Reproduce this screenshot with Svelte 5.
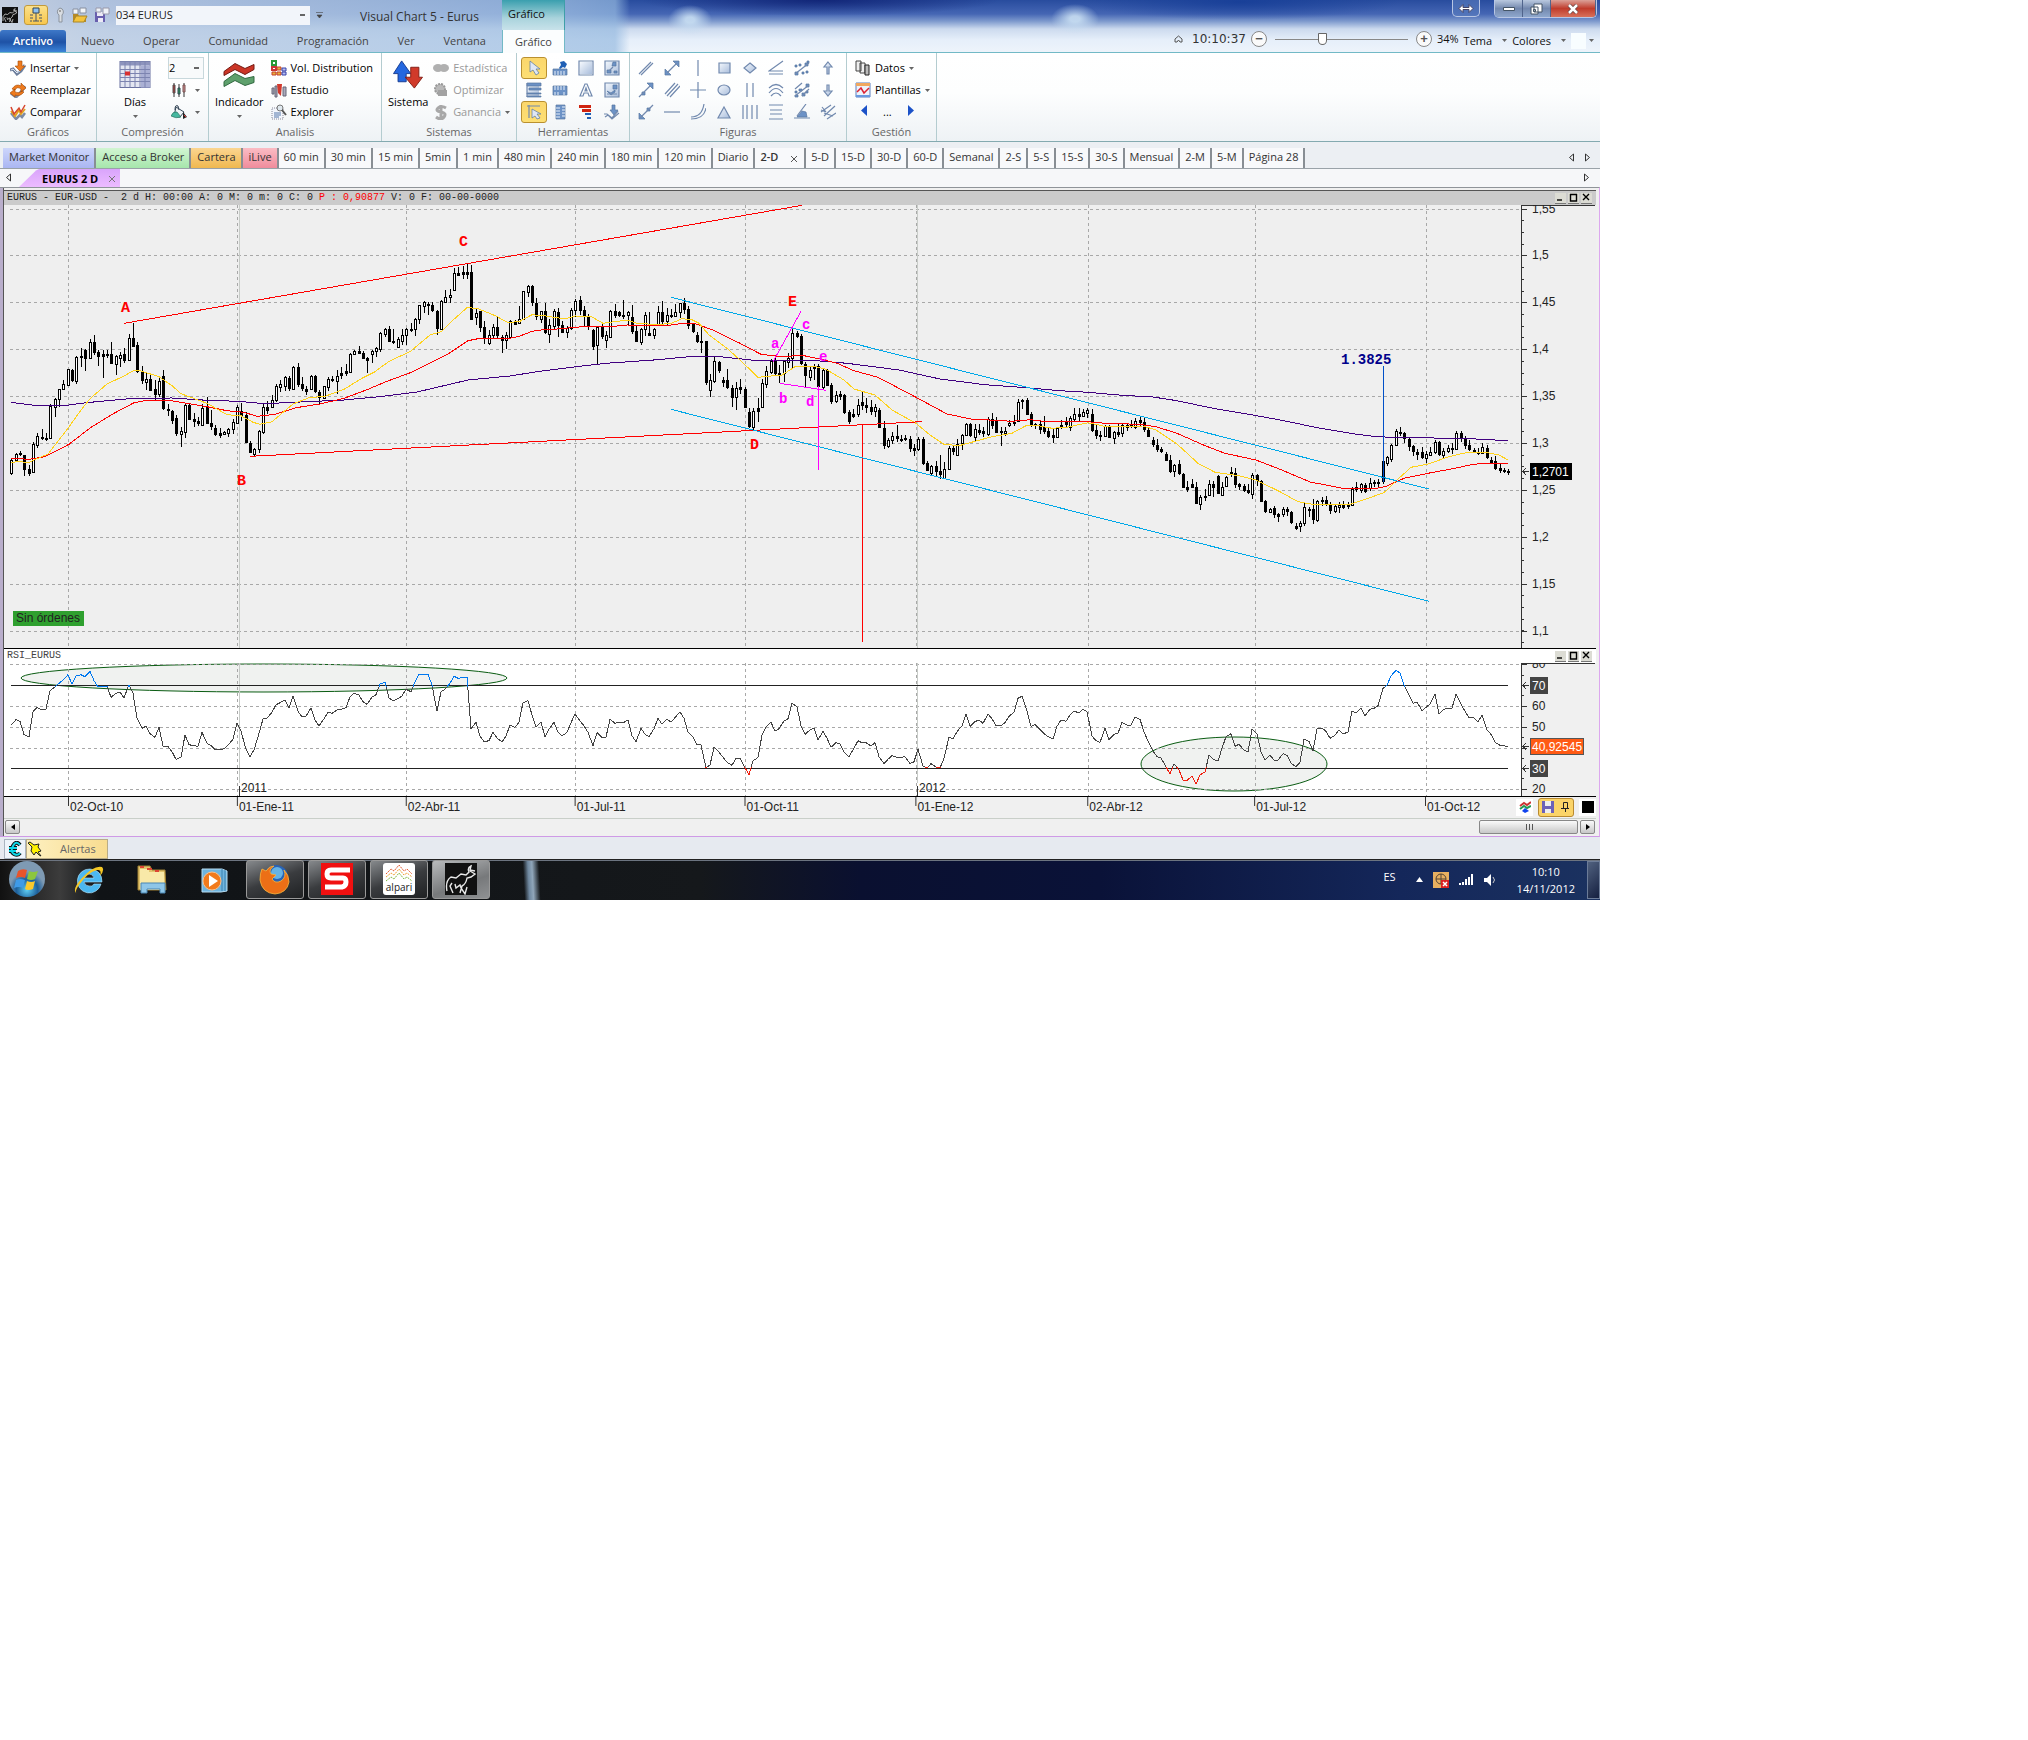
<script lang="ts">
  type Point = [number, number];

  const ribbonTabs = ['Nuevo', 'Operar', 'Comunidad', 'Programación', 'Ver', 'Ventana'];

  const pages = [
    { name: 'Market Monitor', tone: 'blue' },
    { name: 'Acceso a Broker', tone: 'green' },
    { name: 'Cartera', tone: 'amber' },
    { name: 'iLive', tone: 'rose' },
    ...['60 min', '30 min', '15 min', '5min', '1 min', '480 min', '240 min', '180 min', '120 min', 'Diario'].map((name) => ({ name, tone: '' })),
    { name: '2-D', tone: 'current' },
    ...['5-D', '15-D', '30-D', '60-D', 'Semanal', '2-S', '5-S', '15-S', '30-S', 'Mensual', '2-M', '5-M', 'Página 28'].map((name) => ({ name, tone: '' })),
  ];

  // pale: shaded area, f: solid shape, s: outline, cut: white marks, on: pressed
  const tools = [
    { name: 'Puntero', f: 'M4 1v11l3-2 3 5 3-2-3-4h4z', on: true },
    { name: 'Regla fija', f: 'M1 9h14v6H1z', cut: 'M3 11v4M6 11v4M9 11v4M12 11v4', navy: 'M8 2l4-1 3 3-2 4-2-1-3 2-1-1 2-3z' },
    { name: 'Zona', s: 'M1 1h14v14H1z', pale: 'M2 2h12v12H2z' },
    { name: 'Ampliar', pale: 'M1 1h14v14H1z', s: 'M1 1h14v14H1zM9 7l-4 4', f: 'M9 2h3v4H8z M3 10h4v3H3z M10 11h3v2h-3z' },
    { name: 'Panel', pale: 'M1 1h12v14H1z', f: 'M1 1h14v3H1z M3 6h12v2H3z M1 11h14v1H1z M1 14h14v1H1z', s: 'M1 1v14' },
    { name: 'Regla', f: 'M1 4h14v9H1z', cut: 'M3 4v4M6 4v4M9 4v4M12 4v4M3 10v3M6 10v3M12 10v3' },
    { name: 'Texto', s: 'M2 14L7 2h2l5 12h-3l-1-3H6l-1 3zM7 9h2L8 6z' },
    { name: 'Imagen', pale: 'M1 1h14v14H1z', s: 'M1 1h14v14H1zM3 12h10', f: 'M9 3h4v4H9z M3 9l4 2 4-3v2l-4 3z' },
    { name: 'Imán', f: 'M6 5v9l3-2 2 3 3-1-3-4h4z', s: 'M1 2h13M3 1v13', on: true },
    { name: 'Regla vertical', f: 'M4 1h9v14H4z', cut: 'M4 4h4M4 7h4M4 10h4M4 13h4M10 3h3M10 6h3M10 9h3M10 12h3' },
    { name: 'Fibonacci', red: 'M1 1h12v3H1z M4 5h9v3H4z', navy: 'M7 9h6v2H7z M9 13h4v2H9z' },
    { name: 'Ondas', s: 'M0 10h3l5 4 6-7M1 13l3-2 4 4 7-6', f: 'M8 1h3v5h3l-4 5-4-5h2z' },
  ];

  const figures = [
    { name: 'Segmento', s: 'M1 14L13 2M3 15L15 3' },
    { name: 'Recta', s: 'M3 13L13 3', f: 'M1 15v-6l6 6z M15 1v6L9 1z' },
    { name: 'Vertical', s: 'M8 0v16' },
    { name: 'Rectángulo', s: 'M3 3h11v10H3z', pale: 'M3 3h11v10H3z' },
    { name: 'Rombo', s: 'M8 3l6 5-6 5-6-5z', pale: 'M8 3l6 5-6 5-6-5z' },
    { name: 'Ángulo', s: 'M15 1L1 11h14M1 14h14' },
    { name: 'Canal', s: 'M1 14L15 3', f: 'M1 5h2v2H1z M5 4h2v2H5z M11 3h3v3h-3z M1 12h3v3H1z M8 12h2v2H8z M12 11h2v2h-2z M13 1h2v2h-2z' },
    { name: 'Flecha arriba', s: 'M8 2l4 5H9v7H7V7H4z', pale: 'M8 2l4 5H9v7H7V7H4z' },
    { name: 'Semirrecta', s: 'M1 15L12 4', f: 'M15 1v6L9 1z M4 10h3v3H4z' },
    { name: 'Paralelas', s: 'M1 12L11 1M3 14L14 2M6 15L16 4' },
    { name: 'Cruz', s: 'M8 0v16M0 8h16' },
    { name: 'Elipse', s: 'M2 8a6 5 0 0 1 12 0a6 5 0 0 1-12 0z', pale: 'M2 8a6 5 0 0 1 12 0a6 5 0 0 1-12 0z' },
    { name: 'Dos verticales', s: 'M5 1v14M11 1v14' },
    { name: 'Arcos', s: 'M1 6q7-7 14 0M1 11q7-9 14 0M3 14q5-6 10 0' },
    { name: 'Regresión', s: 'M1 7L8 1M1 14L15 3M8 14l7-7', f: 'M1 9h2v2H1z M5 7h3v2H5z M12 2h3v3h-3z M8 11h3v3H8z M12 9h2v2h-2z M1 13h3v2H1z' },
    { name: 'Flecha abajo', s: 'M8 14l4-5H9V3H7v6H4z', pale: 'M8 14l4-5H9V3H7v6H4z' },
    { name: 'Extensión', s: 'M2 14L15 1', f: 'M1 15V9l6 6z M9 4h3v3H9z' },
    { name: 'Horizontal', s: 'M0 8h16' },
    { name: 'Arco', s: 'M1 13q11 0 13-13M1 15q13 0 15-11' },
    { name: 'Triángulo', s: 'M8 3l6 11H2z', pale: 'M8 3l6 11H2z' },
    { name: 'Ciclos', s: 'M1 1v14M5 1v14M10 1v14M15 1v14' },
    { name: 'Niveles', s: 'M1 1h14M2 6h12M2 10h12M1 15h14' },
    { name: 'Gann', s: 'M0 14h16M3 12L12 0', f: 'M3 13l5-6 4 1 1 5z' },
    { name: 'Tridente', s: 'M1 8l10-7M4 12L15 2M7 15l9-6M2 3l4 5M4 9l9 3M1 6l5 2' },
  ];

  // high, body top, body bottom, low in thirds of a pixel; a trailing "+" is a rising bar
  const quotes = `838 841 880 884+|820 822 841 845+|813 819 822 828|825 826 868 887|855 867 878 889|785 793 875 878+|760 769 795 803+|748 771 775 780|759 773 776 782|672 678 775 778+
655 656 680 710+|627 628 656 682+|600 612 628 630+|566 568 615 618+|566 570 600 605|529 532 602 611+|505 529 532 560|506 511 535 572|478 487 535 538+|465 486 516 524
511 516 528 557|509 523 527 593|509 523 526 535|486 523 548 552|525 529 552 584+|517 526 535 561+|505 522 540 548|463 474 541 543+|430 475 499 502|486 496 573 578
558 577 600 611|580 597 605 630+|579 597 629 631|600 627 642 663|592 603 642 651+|570 588 684 690|673 686 690 709|690 694 720 733|705 714 759 768|741 753 762 800+
671 675 757 773+|672 675 717 720|700 717 723 742|711 724 728 738|673 683 735 739+|651 677 730 732|690 729 737 751|735 743 763 768|744 759 764 774|753 757 763 765+
743 746 760 772+|717 727 746 762+|675 681 730 732+|670 692 705 722|697 705 787 790|784 789 815 819|803 806 822 829+|750 754 808 819+|668 682 757 762+|664 682 690 702
645 659 682 685+|612 619 660 665+|600 613 620 636+|588 592 619 632+|588 594 625 632|558 560 628 630+|548 561 612 620|592 612 625 632|618 627 632 645|585 587 628 630+
585 588 634 638|630 635 652 671|617 619 655 658+|590 596 620 632+|588 597 600 606|570 588 602 642+|560 579 585 596|552 574 580 588|519 521 576 580+|510 512 521 525+
498 513 519 523|514 519 534 538|532 535 540 578|509 512 521 548+|500 505 512 532+|457 460 508 515+|444 447 461 470+|438 447 482 486|447 483 486 492|471 478 500 503+
447 465 482 496+|443 446 464 496+|430 446 449 455|413 418 448 467+|374 376 418 431+|364 367 378 398+|366 372 376 405|366 374 389 396|391 394 444 465|361 364 446 449+
331 351 365 368+|328 345 352 368+|264 278 329 332+|260 278 284 288|258 277 282 296|252 277 282 296|255 276 418 420|387 400 410 434+|392 394 440 455|424 440 475 491
450 465 490 496+|433 441 466 473+|411 441 464 476|465 470 480 518|455 466 481 506+|420 422 472 475+|419 423 431 436|378 418 430 432+|332 334 418 420+|315 317 335 351+
315 317 366 378|354 368 408 419|392 394 418 428+|370 393 457 462|418 436 463 489+|386 394 438 449+|385 396 436 472|424 436 455 460|437 443 457 474+|385 389 444 449+
356 363 389 410+|348 361 390 406|378 391 408 440|403 409 435 450|446 450 497 511|438 440 496 552+|432 441 467 476|452 465 479 505+|390 394 470 474+|372 393 404 415
394 397 406 411|360 404 408 417|393 397 406 438+|376 411 454 461|435 453 482 486|443 446 485 494+|397 406 448 467+|395 460 464 466|443 448 466 478+|379 396 436 438+
363 397 422 431|384 406 424 436+|386 404 409 414|372 396 409 411+|368 370 396 414+|354 370 386 402|379 387 436 447|428 433 452 460|455 464 483 490|436 482 486 518
482 484 605 614|583 600 630 650+|530 543 602 608+|542 545 570 578|592 600 605 620|568 600 622 628|615 625 650 682|606 625 650 690+|597 622 627 643|622 626 680 682
683 696 738 743|684 693 740 749+|654 684 693 726|597 610 682 685+|558 573 612 625+|536 544 575 583+|524 543 580 586|555 580 584 609|540 543 580 606+|520 535 546 565+
447 459 535 565+|453 459 468 475|463 468 550 556|546 551 585 622|561 571 590 604+|551 560 565 600|551 558 617 628|567 570 622 630+|566 570 615 617|609 615 663 671
632 644 663 670+|632 643 648 660|642 645 695 702|691 695 722 731|687 702 707 713|658 675 703 711+|635 666 675 690|655 675 680 698|661 681 693 706|672 682 694 710+
683 690 741 744|722 744 795 806|773 781 797 804+|756 769 781 793+|735 768 775 786|765 777 780 786|764 773 777 783|768 777 804 815|791 804 809 828|771 778 808 812+
771 778 848 854|842 849 871 874|855 857 878 888+|843 857 874 887|826 873 881 896|846 866 893 896+|797 803 866 868+|795 803 813 825|776 792 825 827+|762 766 790 809+
728 731 766 769+|730 733 766 770|732 748 770 782+|733 750 755 766|742 754 760 772|710 718 761 768+|700 718 735 746|712 724 755 760|742 753 757 798|740 754 758 769+
720 728 735 742+|705 725 730 738|658 666 722 724+|658 660 664 686|654 661 702 704|696 702 734 742|728 731 735 748|721 731 746 763|708 742 753 762|740 753 767 775
745 765 770 788|740 744 770 775+|720 735 740 746|712 727 732 742|708 715 740 752+|684 702 718 725+|684 702 707 722|688 695 708 712+|684 690 700 715+|687 702 750 755
735 750 765 777|752 764 768 784|734 738 768 771+|735 738 770 775|753 757 775 791+|730 756 761 771|728 735 760 770+|730 735 740 752|720 732 738 744|715 723 740 747+
709 720 726 742|714 725 747 755|744 749 767 770|770 779 793 802|778 795 808 816|801 808 812 819|815 822 839 842|826 841 872 879|851 854 874 890+|840 852 880 885
878 882 921 924|903 922 927 935|896 911 920 925|906 921 968 970|946 951 971 990+|928 947 952 962|901 912 944 948+|902 913 920 951|885 888 940 943|907 920 944 949+
887 890 918 920+|861 876 880 890|864 878 913 924|909 912 917 929|913 918 930 935|912 930 937 942|879 885 941 956+|883 885 900 917|901 903 962 965|959 964 992 998
983 986 997 1000+|978 985 1002 1014|999 1001 1007 1026|981 988 1003 1010+|980 988 993 1008|993 996 1026 1032|1030 1039 1043 1050|1024 1028 1038 1057+|967 981 1030 1038+|982 986 990 1011
957 986 1018 1033|961 964 1021 1025+|950 960 964 978+|947 959 973 977|965 974 990 1002|972 978 992 1000+|965 975 982 998+|963 973 980 988|965 972 977 988|922 926 976 978+
905 922 928 935|908 912 930 940+|910 915 933 938|895 908 925 932+|899 905 910 922|896 906 910 924|842 844 904 912|829 832 848 859+|792 796 836 846+|747 753 796 799+
741 755 759 769|756 759 775 790|772 778 797 812|794 797 814 829|806 816 822 840|801 816 830 838|813 822 835 848+|801 816 824 827+|779 787 817 822+|782 785 822 828
803 813 826 838+|796 804 812 820+|790 804 808 822|754 760 807 810+|753 760 772 786|768 778 796 807|779 795 807 812|805 810 815 820|803 815 820 826|789 801 818 822+
795 803 832 838|832 840 845 852|828 843 865 870|850 864 870 878|864 869 873 878|866 872 877 884`;

  const barX = (i: number) => Math.round(11.4 + i * 4.339);
  const px = (v: number) => Math.round(v / 3);

  const candles = quotes.split(/[|\n]/).map((row, i) => {
    const up = row.endsWith('+');
    const [high, top, bottom, low] = row.replace('+', '').split(' ').map(Number);
    return { x: barX(i), high: px(high), top: px(top), height: Math.max(1, px(bottom) - px(top)), bottom: px(bottom), low: px(low), up };
  });

  const rsi = [
    255, 239, 244, 284, 290, 215, 202, 210, 207, 152, 141, 130, 120, 104, 133, 108, 104, 110, 94, 122,
    141, 139, 138, 172, 160, 157, 173, 134, 160, 235, 265, 259, 281, 292, 262, 318, 319, 335, 358, 352,
    285, 314, 317, 319, 277, 310, 317, 329, 329, 326, 315, 298, 250, 274, 328, 350, 330, 280, 237, 234,
    217, 194, 188, 180, 204, 169, 214, 230, 229, 203, 240, 258, 236, 217, 220, 210, 208, 203, 170, 160,
    165, 185, 193, 171, 164, 132, 127, 174, 182, 176, 168, 148, 155, 125, 103, 103, 103, 135, 214, 155,
    148, 130, 109, 115, 113, 112, 266, 247, 288, 305, 302, 277, 294, 306, 288, 255, 262, 247, 188, 182,
    225, 262, 247, 290, 268, 247, 277, 288, 277, 248, 222, 243, 257, 277, 317, 278, 292, 291, 238, 250,
    247, 249, 240, 287, 305, 265, 283, 290, 266, 235, 253, 238, 246, 233, 215, 235, 277, 290, 314, 315,
    384, 375, 322, 337, 352, 367, 376, 355, 355, 383, 404, 363, 352, 285, 262, 247, 273, 266, 243, 236,
    190, 200, 258, 283, 270, 265, 300, 274, 295, 322, 308, 312, 336, 350, 330, 302, 308, 308, 318, 308,
    350, 371, 358, 347, 352, 352, 350, 371, 365, 328, 378, 384, 371, 381, 384, 355, 291, 296, 275, 257,
    223, 259, 245, 240, 250, 222, 236, 257, 257, 248, 229, 217, 175, 169, 213, 259, 254, 268, 281, 290,
    297, 259, 240, 244, 225, 213, 219, 208, 215, 288, 302, 307, 265, 299, 283, 280, 247, 255, 256, 232,
    238, 275, 304, 333, 350, 354, 380, 402, 371, 390, 420, 421, 409, 433, 405, 396, 345, 358, 363, 325,
    290, 281, 319, 313, 330, 336, 268, 283, 335, 359, 346, 360, 360, 341, 346, 370, 380, 367, 297, 304,
    333, 267, 264, 274, 295, 286, 270, 281, 277, 213, 219, 205, 227, 208, 205, 197, 145, 136, 108, 91,
    99, 135, 165, 190, 186, 212, 202, 192, 163, 222, 209, 204, 204, 163, 192, 214, 233, 233, 246, 225,
    270, 283, 307, 316, 317, 320,
  ];

  const fast: Point[] = [[11, 848], [17, 845], [29, 847], [34, 840], [48, 822], [68, 745], [81, 690], [90, 656], [107, 612], [124, 588], [134, 571], [141, 573], [159, 590], [172, 617], [181, 641], [207, 670], [227, 704], [241, 707], [253, 727], [260, 733], [272, 725], [293, 672], [310, 652], [324, 650], [344, 628], [362, 595], [375, 575], [389, 544], [410, 515], [430, 465], [441, 455], [455, 415], [467, 383], [477, 385], [496, 408], [508, 428], [520, 424], [532, 404], [546, 408], [565, 417], [575, 408], [591, 409], [603, 430], [627, 420], [637, 430], [658, 434], [672, 429], [682, 416], [692, 419], [699, 430], [709, 465], [727, 505], [740, 540], [758, 592], [782, 585], [795, 560], [813, 558], [826, 568], [844, 600], [854, 627], [875, 645], [892, 690], [916, 730], [930, 765], [944, 793], [959, 797], [992, 770], [1012, 760], [1026, 737], [1040, 738], [1052, 745], [1067, 742], [1088, 728], [1108, 741], [1143, 738], [1156, 750], [1177, 792], [1198, 850], [1215, 877], [1239, 887], [1256, 900], [1280, 935], [1298, 965], [1315, 974], [1349, 974], [1363, 960], [1384, 938], [1397, 900], [1411, 862], [1428, 852], [1449, 830], [1466, 818], [1487, 818], [1499, 825], [1508, 840]];
  const medium: Point[] = [[11, 836], [19, 836], [29, 838], [45, 830], [69, 793], [91, 742], [114, 700], [134, 668], [148, 660], [167, 660], [207, 680], [227, 692], [244, 697], [257, 709], [275, 703], [296, 683], [320, 672], [344, 655], [368, 628], [386, 605], [413, 575], [448, 522], [468, 482], [480, 475], [510, 475], [520, 468], [532, 454], [541, 450], [554, 448], [582, 440], [610, 440], [627, 435], [665, 438], [682, 430], [696, 432], [713, 450], [740, 490], [761, 523], [782, 530], [802, 526], [820, 537], [837, 550], [854, 572], [878, 592], [916, 652], [947, 702], [971, 717], [1012, 724], [1030, 719], [1050, 726], [1088, 725], [1105, 730], [1139, 733], [1156, 740], [1177, 760], [1205, 797], [1225, 820], [1256, 840], [1280, 868], [1311, 907], [1325, 914], [1342, 925], [1377, 925], [1387, 918], [1404, 895], [1428, 880], [1453, 866], [1473, 853], [1487, 850], [1508, 852]];
  const slow: Point[] = [[11, 667], [26, 673], [38, 677], [67, 676], [86, 668], [134, 655], [172, 654], [207, 661], [238, 664], [265, 671], [293, 667], [344, 660], [379, 650], [417, 636], [468, 600], [510, 588], [537, 575], [582, 558], [606, 550], [658, 539], [689, 530], [720, 530], [754, 541], [789, 541], [820, 543], [847, 550], [899, 570], [940, 597], [985, 614], [1030, 624], [1060, 632], [1088, 637], [1122, 646], [1153, 651], [1177, 662], [1215, 686], [1253, 705], [1287, 724], [1315, 742], [1353, 761], [1377, 770], [1404, 773], [1463, 775], [1508, 782]];

  const line = (points: Point[]) => points.map(([x, v]) => `${x},${(v / 3).toFixed(1)}`).join(' ');
  const rsiLine = line(rsi.map((v, i) => [barX(i), v]));

  const averages = [
    { name: 'slow', points: line(slow) },
    { name: 'medium', points: line(medium) },
    { name: 'fast', points: line(fast) },
  ];

  const trends = [
    { tone: 'red', a: [124, 430], b: [802, 76] },
    { tone: 'red', a: [250, 829], b: [922, 725] },
    { tone: 'red', a: [862, 733], b: [862, 1386] },
    { tone: 'sky', a: [671, 352], b: [1429, 927] },
    { tone: 'sky', a: [671, 688], b: [1429, 1264] },
    { tone: 'pink', a: [773, 545], b: [801, 394] },
    { tone: 'pink', a: [780, 610], b: [826, 631] },
    { tone: 'pink', a: [818, 617], b: [818, 870] },
    { tone: 'royal', a: [1383, 558], b: [1383, 905] },
  ];

  const waves = [
    { text: 'A', x: 121, y: 396, tone: 'major' },
    { text: 'B', x: 237, y: 915, tone: 'major' },
    { text: 'C', x: 459, y: 198, tone: 'major' },
    { text: 'D', x: 750, y: 807, tone: 'major' },
    { text: 'E', x: 788, y: 378, tone: 'major' },
    { text: 'a', x: 771, y: 504, tone: 'minor' },
    { text: 'b', x: 779, y: 669, tone: 'minor' },
    { text: 'c', x: 802, y: 447, tone: 'minor' },
    { text: 'd', x: 806, y: 678, tone: 'minor' },
    { text: 'e', x: 819, y: 543, tone: 'minor' },
  ];

  const prices = ['1,55', '1,5', '1,45', '1,4', '1,35', '1,3', '1,25', '1,2', '1,15', '1,1'].map((label, i) => ({ label, y: Math.floor(29 + i * 46.9) }));
  const priceTicks = Array.from({ length: 38 }, (_, i) => Math.floor(29 + i * 11.72));
  const levels = [
    { label: '80', y: 24 },
    { label: '60', y: 66 },
    { label: '50', y: 87 },
    { label: '', y: 108 },
    { label: '20', y: 149 },
  ];
  const rsiTicks = [35, 55, 76, 97, 118, 138];

  const dates = [
    { label: '02-Oct-10', x: 68 },
    { label: '01-Ene-11', x: 237 },
    { label: '02-Abr-11', x: 406 },
    { label: '01-Jul-11', x: 575 },
    { label: '01-Oct-11', x: 745 },
    { label: '01-Ene-12', x: 916 },
    { label: '02-Abr-12', x: 1088 },
    { label: '01-Jul-12', x: 1255 },
    { label: '01-Oct-12', x: 1426 },
  ];
  const years = [
    { label: '2011', x: 239 },
    { label: '2012', x: 917 },
  ];

  let zoom = $state(34);
  let symbol = $state('034 EURUS');
</script>

{#snippet caret()}
  <svg class="caret" width="5" height="3" viewBox="0 0 5 3" aria-hidden="true"><path d="M0 0h5L2.5 3z" /></svg>
{/snippet}

{#snippet bull(size: number)}
  <svg width={size} height={size} viewBox="0 0 32 32" aria-hidden="true">
    <rect width="32" height="32" fill="#111" />
    <path d="M2 28Q0 18 6 14l5 1 5-4 5 1 3-3q-2-4 2-6l-1 4 5 1M25 8l5 3-4 3-4 1q-1 6-5 8l-2 7M7 20l-2 3 3 7M10 21l1 4 4-3 1 3 4 6 2-7" fill="none" stroke="#e8e8e8" stroke-width="1.4" />
  </svg>
{/snippet}

{#snippet glyph(icon: { name: string; s?: string; f?: string; pale?: string; cut?: string; red?: string; navy?: string; on?: boolean })}
  <button class="glyph" class:on={icon.on} aria-label={icon.name}>
    <svg width="16" height="16" viewBox="0 0 16 16">
      {#if icon.pale}<path d={icon.pale} fill="url(#steel)" />{/if}
      {#if icon.f}<path d={icon.f} fill={icon.on ? '#dfe7f4' : '#6c92c6'} stroke="#56759f" stroke-width=".7" />{/if}
      {#if icon.s}<path d={icon.s} fill="none" stroke="#7189ae" stroke-width="1.2" />{/if}
      {#if icon.cut}<path d={icon.cut} fill="none" stroke="#e8f0fa" />{/if}
      {#if icon.red}<path d={icon.red} fill="#cf2410" />{/if}
      {#if icon.navy}<path d={icon.navy} fill="#1f5fb4" />{/if}
    </svg>
  </button>
{/snippet}

{#snippet paneButtons()}
  <div class="pane-buttons">
    <button aria-label="Minimizar panel"><svg width="9" height="9"><path d="M1 7h5" /></svg></button>
    <button aria-label="Maximizar panel"><svg width="9" height="9"><path d="M1 1.5h7M1.5 1v7h6V1" /></svg></button>
    <button aria-label="Cerrar panel"><svg width="9" height="9"><path d="M1 1l6 6M7 1L1 7" /></svg></button>
  </div>
{/snippet}

<main class="screen">
  <header class="frame">
    <div class="title-bar">
      <div class="quick">
        {@render bull(16)}
        <button class="quick-on" aria-label="Conexión">
          <svg width="16" height="16" viewBox="0 0 16 16"><path d="M5 1h6v5H5z" fill="#8cc0f0" stroke="#345" /><path d="M8 6v8M5 14h6M2 8h3M11 8h3M2 11h3M11 11h3M2 14h2M12 14h2" stroke="#456" fill="none" /></svg>
        </button>
        <button aria-label="Clave">
          <svg width="12" height="16" viewBox="0 0 12 16"><path d="M6 1a4 4 0 0 1 2 7v7H5V8a4 4 0 0 1 1-7z" fill="#d9dde2" stroke="#8b939d" /><circle cx="6" cy="4" r="1" fill="#888" /></svg>
        </button>
        <button aria-label="Abrir">
          <svg width="16" height="16" viewBox="0 0 16 16"><path d="M1 2h5v5H1zM8 1h6v5H8z" fill="#f2f5f8" stroke="#8890a0" /><path d="M1 7h5l1 2h7v6H1z" fill="#b58a28" /><path d="M1 15l3-6h11l-3 6z" fill="#f4c33c" stroke="#a98626" /></svg>
        </button>
        <button aria-label="Guardar">
          <svg width="16" height="16" viewBox="0 0 16 16"><path d="M1 5h10v10H1z" fill="#685fae" /><path d="M3 5h6v4H3zM4 11h5v4H4z" fill="#eceaf6" /><path d="M2 1h5v4H2zM9 1h6v6H9z" fill="#eef2f8" stroke="#99a" /></svg>
        </button>
        <select class="symbol" aria-label="Símbolo" bind:value={symbol}><option>034 EURUS</option></select>
        <button class="more" aria-label="Personalizar"><svg width="7" height="6"><path d="M0 .5h7M1 3h5L3.5 6z" fill="#444" stroke="#444" stroke-width=".6" /></svg></button>
      </div>
      <h1>Visual Chart 5 - Eurus</h1>
      <div class="context">Gráfico</div>
      <div class="window-buttons">
        <button class="swap" aria-label="Cambiar"><svg width="16" height="9"><path d="M1 4.5l4-4v3h6v-3l4 4-4 4v-3H5v3z" fill="#fff" stroke="#446" /></svg></button>
        <div class="caption">
          <button aria-label="Minimizar"><svg width="12" height="6"><path d="M.5 1.5h11v3H.5z" fill="#fff" stroke="#456" /></svg></button>
          <button aria-label="Restaurar"><svg width="13" height="12"><path d="M4 1h8v8H4zM1 4h7v7H1zM3.5 6.5h2v2h-2z" fill="#fff" stroke="#456" /></svg></button>
          <button class="close" aria-label="Cerrar"><svg width="12" height="10"><path d="M2 1l8 8M10 1L2 9" stroke="#644" stroke-width="4" /><path d="M2 1l8 8M10 1L2 9" stroke="#fff" stroke-width="2.5" /></svg></button>
        </div>
      </div>
    </div>

    <nav class="ribbon-tabs">
      <button class="file">Archivo</button>
      <div class="tab-list">
        {#each ribbonTabs as tab}
          <button>{tab}</button>
        {/each}
      </div>
      <button class="selected">Gráfico</button>
      <div class="status">
        <svg width="9" height="8" viewBox="0 0 9 8" fill="none" stroke="#555" aria-hidden="true"><path d="M1 4l3.5-3L8 4v3H6L4.5 5 3 7H1z" /></svg>
        <time>10:10:37</time>
        <button class="round" aria-label="Reducir">−</button>
        <input type="range" min="0" max="98" bind:value={zoom} aria-label="Zoom" />
        <button class="round" aria-label="Ampliar">+</button>
        <span class="percent">34%</span>
        <button class="drop">Tema {@render caret()}</button>
        <button class="drop">Colores {@render caret()}</button>
        <button class="swatch" aria-label="Color"><i></i>{@render caret()}</button>
      </div>
    </nav>
  </header>

  <section class="ribbon" aria-label="Gráfico">
    <div class="group charts">
      <div class="column">
        <button class="command"><svg width="16" height="16" viewBox="0 0 16 16"><path d="M0 10l3-1 4 5 4-3 4-6" fill="none" stroke="#6d7f9c" stroke-width="3" /><path d="M1 10l2-1 4 4 4-3 4-5" fill="none" stroke="#dfe8f5" /><path d="M8 1h4v5h3l-5 5-5-5h3z" fill="#ee7b1e" stroke="#a34a08" stroke-width=".6" /></svg>Insertar {@render caret()}</button>
        <button class="command"><svg width="16" height="16" viewBox="0 0 16 16"><path d="M1 11l5 4 5-5 4-6" fill="none" stroke="#7d8aa3" stroke-width="3" /><path d="M2 7q4-6 9-3V1l5 5-5 4V7Q7 4 5 8zM0 11l5-4v3q4 2 7-1l2 1q-4 5-9 3v2z" fill="#ee7b1e" stroke="#a34a08" stroke-width=".6" /></svg>Reemplazar</button>
        <button class="command"><svg width="16" height="16" viewBox="0 0 16 16"><path d="M1 9l5 6 4-4 2 2 3-4" fill="none" stroke="#7d8ba5" stroke-width="2.5" /><path d="M1 7l4 5 4-6 2 4 4-5" fill="none" stroke="#e3a41e" stroke-width="2" /><path d="M1 3l3 7 5-6 2 4 4-7" fill="none" stroke="#d6452d" stroke-width="1.5" /></svg>Comparar</button>
      </div>
      <h2>Gráficos</h2>
    </div>

    <div class="group compression">
      <div class="body">
        <button class="big">
          <svg width="32" height="28" viewBox="0 0 32 28" aria-hidden="true"><rect x="1" y="1" width="30" height="26" fill="#e3e6f1" stroke="#6870a0" /><path d="M1 1h30v4H1z" fill="#8d94bd" /><path d="M22 5h9v22h-9z" fill="#aab0d4" /><path d="M1 9h30M1 13h30M1 17h30M1 21h30M6 1v26M11 1v26M16 1v26M21 1v26M26 1v26" stroke="#7c84b0" /><path d="M6 11h5v4H6z" fill="#d83030" /></svg>
          Días {@render caret()}
        </button>
        <div class="column tight">
          <select aria-label="Compresión"><option>2</option></select>
          <button class="command" aria-label="Tipo de gráfico"><svg width="16" height="16" viewBox="0 0 16 16"><path d="M3 1v14M8 2v13M13 1v14" stroke="#333" /><path d="M2 3h2v8H2z" fill="#a33" stroke="#555" /><path d="M7 6h2v6H7z" fill="#2d9a55" stroke="#345" /><path d="M12 3h2v7h-2z" fill="#d08a8a" stroke="#755" /></svg>{@render caret()}</button>
          <button class="command" aria-label="Relleno"><svg width="16" height="16" viewBox="0 0 16 16"><path d="M5 3l8 5-4 5-6-1z" fill="#f0f3f6" stroke="#345" /><path d="M0 12q2-5 6-4l4 5q-5 2-10-1z" fill="#46b8a0" stroke="#265" stroke-width=".6" /><path d="M4 6q0-6 3-4l1 4" fill="none" stroke="#345" /><path d="M12 8l4 5-4 2z" fill="#222" /><path d="M13 11l2 2" stroke="#d33" /></svg>{@render caret()}</button>
        </div>
      </div>
      <h2>Compresión</h2>
    </div>

    <div class="group analysis">
      <div class="body">
        <button class="big">
          <svg width="32" height="28" viewBox="0 0 32 28" aria-hidden="true"><path d="M1 11L12 3l10 5 9-4v5l-9 5-10-5L1 15z" fill="#cb3526" stroke="#741a12" /><path d="M1 21l11-8 10 5 9-2v6l-9 3-10-5-11 6z" fill="#5ea06c" stroke="#316941" /></svg>
          Indicador {@render caret()}
        </button>
        <div class="column">
          <button class="command"><svg width="16" height="16" viewBox="0 0 16 16"><path d="M1 1h4v4H1z" fill="#fff" stroke="#2a9a35" stroke-width="2" /><path d="M1 7h4v3H1z" fill="#fff" stroke="#c33" stroke-width="2" /><path d="M1 12h4v3H1zM6 12h4v3H6zM6 7h4v3H6z" fill="#e9b03a" stroke="#c3402a" /><path d="M11 8h4v3h-4zM11 12h4v3h-4z" fill="#b6bdf0" stroke="#3842a8" /></svg>Vol. Distribution</button>
          <button class="command"><svg width="16" height="16" viewBox="0 0 16 16"><path d="M1 6h2v6H1zM4 4h2v11H4zM12 5h3v9h-3z" fill="#aab" stroke="#667" /><path d="M6 2h5l-1 12-3-3z" fill="#d23a2e" /></svg>Estudio</button>
          <button class="command"><svg width="16" height="16" viewBox="0 0 16 16"><path d="M1 4h11v11H1z" fill="#f3f6fc" stroke="#889" stroke-dasharray="1 1" /><path d="M3 9h7M3 11h7M3 13h5" stroke="#57a" /><circle cx="9" cy="4" r="3" fill="#dfe8ee" stroke="#777" /><path d="M11 6l4 5" stroke="#555" stroke-width="2" /></svg>Explorer</button>
        </div>
      </div>
      <h2>Analisis</h2>
    </div>

    <div class="group systems">
      <div class="body">
        <button class="big">
          <svg width="34" height="32" viewBox="0 0 34 32" aria-hidden="true"><path d="M10 1l10 14h-5v9H6v-9H1z" fill="#2467df" stroke="#12378c" /><path d="M20 8h9v11h4L24 31 14 19h6z" fill="#d03a2a" stroke="#7e1b12" /></svg>
          Sistema
        </button>
        <div class="column">
          <button class="command off" disabled><svg width="16" height="16" viewBox="0 0 16 16"><ellipse cx="5" cy="8" rx="5" ry="4" /><ellipse cx="11" cy="8" rx="5" ry="4" /></svg>Estadística</button>
          <button class="command off" disabled><svg width="16" height="16" viewBox="0 0 16 16"><circle cx="7" cy="7" r="5" fill="#b9b9b9" stroke="#999" stroke-width="2" stroke-dasharray="2 1" /><path d="M5 8h9v6H5z" fill="#a2a2a2" /></svg>Optimizar</button>
          <button class="command off" disabled><svg width="16" height="16" viewBox="0 0 16 16"><path d="M13 4q-5-3-8 0t3 4 3 5-8 0M8 1v14" fill="none" stroke="#a8a8a8" stroke-width="3" /></svg>Ganancia {@render caret()}</button>
        </div>
      </div>
      <h2>Sistemas</h2>
    </div>

    <svg class="defs" width="0" height="0" aria-hidden="true">
      <linearGradient id="steel" x1="0" y1="0" x2="1" y2="1"><stop offset="0" stop-color="#f4f8fd" /><stop offset="1" stop-color="#a9bddb" /></linearGradient>
    </svg>

    <div class="group toolset">
      <div class="glyphs">
        {#each tools as icon}{@render glyph(icon)}{/each}
      </div>
      <h2>Herramientas</h2>
    </div>

    <div class="group figures">
      <div class="glyphs wide">
        {#each figures as icon}{@render glyph(icon)}{/each}
      </div>
      <h2>Figuras</h2>
    </div>

    <div class="group manage">
      <div class="column">
        <button class="command"><svg width="16" height="16" viewBox="0 0 16 16"><path d="M1 1h5v10H1zM5 3h5v10H5z" fill="#eee" stroke="#444" /><path d="M10 5h4v10h-4z" fill="#bbb" stroke="#222" /></svg>Datos {@render caret()}</button>
        <button class="command"><svg width="16" height="16" viewBox="0 0 16 16"><path d="M1 1h14v14H1z" fill="#eef3fb" stroke="#5a7fc0" /><path d="M1 1h14v3H1z" fill="#f0a860" /><path d="M2 10l4-4 3 5 5-5" fill="none" stroke="#d23" stroke-width="1.5" /><path d="M1 13h14v2H1z" fill="#6a9ae0" /></svg>Plantillas {@render caret()}</button>
        <div class="pager">
          <button aria-label="Anterior"><svg width="6" height="11"><path d="M6 0v11L0 5.5z" fill="#1c52c8" /></svg></button>
          <button>...</button>
          <button aria-label="Siguiente"><svg width="6" height="11"><path d="M0 0v11l6-5.5z" fill="#1c52c8" /></svg></button>
        </div>
      </div>
      <h2>Gestión</h2>
    </div>
  </section>

  <nav class="pages">
    {#each pages as page}
      <button class="page {page.tone}">
        {page.name}
        {#if page.tone === 'current'}<svg width="18" height="8" viewBox="0 0 18 8" aria-hidden="true"><path d="M10 1l6 6M16 1l-6 6" stroke="#555" /></svg>{/if}
      </button>
    {/each}
    <div class="steps">
      <button aria-label="Páginas anteriores"><svg width="6" height="9"><path d="M5.5 1v7l-4-3.5z" /></svg></button>
      <button aria-label="Páginas siguientes"><svg width="6" height="9"><path d="M.5 1v7l4-3.5z" /></svg></button>
    </div>
  </nav>

  <div class="documents">
    <button class="step" aria-label="Anterior"><svg width="6" height="9"><path d="M5.5 1v7l-4-3.5z" /></svg></button>
    <button class="document">EURUS 2 D <svg width="8" height="8" viewBox="0 0 8 8" aria-hidden="true"><path d="M1 1l6 6M7 1L1 7" stroke="#777" /></svg></button>
    <button class="step end" aria-label="Siguiente"><svg width="6" height="9"><path d="M.5 1v7l4-3.5z" /></svg></button>
  </div>

  <section class="chart-window">
    <div class="quote-bar">
      <span>EURUS - EUR-USD -&nbsp; 2 d H: 00:00 A: 0 M: 0 m: 0 C: 0 <em>P : 0,90877</em> V: 0 F: 00-00-0000</span>
      {@render paneButtons()}
    </div>

    <svg class="plot" viewBox="4 25 1592 443" role="img" aria-label="EURUS 2 D">
      <g class="grid">
        {#each prices as p}<path d="M10 {p.y}.5H1521" />{/each}
        {#each dates as d}<path d="M{d.x}.5 25V468" />{/each}
      </g>
      {#each years as y}<path class="year" d="M{y.x}.5 25V468" />{/each}

      <g class="candles">
        {#each candles as c}
          <path d="M{c.x}.5 {c.high}V{c.top}M{c.x}.5 {c.bottom}V{c.low}" />
          {#if c.up}
            <rect x={c.x - 0.5} y={c.top + 0.5} width="2" height={c.height} fill="#fff" />
          {:else}
            <rect class="down" x={c.x - 1} y={c.top} width="3" height={c.height + 1} />
          {/if}
        {/each}
      </g>

      {#each averages as a}<polyline class="average {a.name}" points={a.points} />{/each}
      {#each trends as t}
        <line class="trend {t.tone}" x1={t.a[0]} y1={t.a[1] / 3} x2={t.b[0]} y2={t.b[1] / 3} />
      {/each}
      {#each waves as w}<text class={w.tone} x={w.x} y={w.y / 3}>{w.text}</text>{/each}
      <text class="target" x="1341" y="184">1.3825</text>

      <rect x="13" y="431" width="71" height="15" fill="#2fa02f" />
      <text class="orders" x="16" y="442">Sin órdenes</text>

      <g class="axis">
        <path d="M1521.5 25V468M1521 25.5H1595" />
        {#each prices as p}
          <path d="M1521 {p.y}.5h6" />
          <text x="1532" y={p.y + 4}>{p.label}</text>
        {/each}
        {#each priceTicks as y}<path d="M1521 {y}.5h3" />{/each}
        <path d="M1523 291.5h6M1526 288l-3 3.5 3 3.5" />
        <rect x="1530" y="283" width="42" height="17" fill="#000" />
        <text class="light" x="1532" y="296">1,2701</text>
      </g>
    </svg>

    <div class="rsi-bar">
      <span>RSI_EURUS</span>
      {@render paneButtons()}
    </div>

    <svg class="plot rsi" viewBox="4 23 1592 133" role="img" aria-label="RSI_EURUS">
      <defs>
        <clipPath id="overbought"><rect x="4" y="23" width="1592" height="24" /></clipPath>
        <clipPath id="neutral"><rect x="4" y="46" width="1592" height="81" /></clipPath>
        <clipPath id="oversold"><rect x="4" y="127" width="1592" height="30" /></clipPath>
      </defs>
      <rect x="1521" y="23" width="75" height="133" fill="#f0f0f0" />
      <ellipse class="zone" cx="264" cy="38" rx="243" ry="14" />
      <ellipse class="zone" cx="1234" cy="124" rx="93" ry="27" />
      <g class="grid">
        {#each levels as l}<path d="M10 {l.y}.5H1521" />{/each}
        {#each dates as d}<path d="M{d.x}.5 23V156" />{/each}
      </g>
      {#each years as y}
        <path class="year" d="M{y.x}.5 23V143" />
        <path class="mark" d="M{y.x}.5 146V156" />
        <text x={y.x + 2} y="152">{y.label}</text>
      {/each}
      <path class="limit" d="M11 45.5H1508M11 128.5H1508" />
      <polyline class="strength" points={rsiLine} clip-path="url(#neutral)" />
      <polyline class="strength high" points={rsiLine} clip-path="url(#overbought)" />
      <polyline class="strength low" points={rsiLine} clip-path="url(#oversold)" />
      <g class="axis">
        <path d="M1521.5 23V156M1521 23.5H1595" />
        {#each levels as l}
          <path d="M1521 {l.y}.5h6" />
          {#if l.label}<text x="1532" y={l.y + 4}>{l.label}</text>{/if}
        {/each}
        {#each rsiTicks as y}<path d="M1521 {y}.5h3" />{/each}
        <path d="M1523 45.5h6M1526 42l-3 3.5 3 3.5M1523 106.5h6M1526 103l-3 3.5 3 3.5M1523 128.5h6M1526 125l-3 3.5 3 3.5" />
        <rect x="1530" y="37" width="18" height="17" fill="#444" />
        <rect x="1530" y="120" width="18" height="17" fill="#444" />
        <rect x="1530.5" y="98.5" width="53" height="16" fill="#ff5a14" stroke="#555" />
        <text class="light" x="1532" y="50">70</text>
        <text class="light" x="1532" y="133">30</text>
        <text class="light" x="1532" y="111">40,92545</text>
      </g>
    </svg>

    <div class="date-row">
      <svg class="dates" viewBox="4 0 1508 21" role="img" aria-label="Fechas">
        {#each dates as d}
          <path class="mark" d="M{d.x}.5 0v9" />
          <text x={d.x + 2} y="14">{d.label}</text>
        {/each}
      </svg>
      <button class="corner" aria-label="Indicadores"><svg width="12" height="12"><path d="M1 5l4-3 3 2 4-3" fill="none" stroke="#c33" stroke-width="2" /><path d="M1 8l4-3 3 2 4-2" fill="none" stroke="#295" stroke-width="2" /><path d="M6 7l4 3-4 2-3-2z" fill="#14e" /></svg></button>
      <div class="pair">
        <button aria-label="Guardar"><svg width="12" height="12"><path d="M0 0h12v12H0z" fill="#6d62b8" /><path d="M3 0h6v5H3zM3 8h6v4H3z" fill="#eee" /></svg></button>
        <button aria-label="Fijar"><svg width="8" height="10"><path d="M2.5.5h4v6h-4zM0 6.5h8M4.5 6v4" fill="none" stroke="#222" /></svg></button>
      </div>
      <button class="corner" aria-label="Fondo"><svg width="12" height="12"><path d="M0 0h12v12H0z" /></svg></button>
    </div>

    <div class="scroll">
      <button aria-label="Desplazar a la izquierda"><svg width="4" height="6"><path d="M4 0v6L0 3z" /></svg></button>
      <span class="track"><i class="thumb"><svg width="8" height="6"><path d="M1.5 0v6M4.5 0v6M7.5 0v6" stroke="#555" /></svg></i></span>
      <button aria-label="Desplazar a la derecha"><svg width="4" height="6"><path d="M0 0v6l4-3z" /></svg></button>
    </div>
  </section>

  <div class="alerts">
    <button class="euro" aria-label="Euro"><svg width="14" height="16" viewBox="0 0 14 16"><path d="M12 4Q8-1 5 5T6 13t6-1M1 7h8M1 10h7" fill="none" stroke="#111" stroke-width="4" /><path d="M12 4Q8-1 5 5T6 13t6-1M1 7h8M1 10h7" fill="none" stroke="#10d8e8" stroke-width="2" /></svg></button>
    <button class="alert"><svg width="16" height="16" viewBox="0 0 16 16" aria-hidden="true"><path d="M1 2l2-1 4 3 5-1-1 3 3 4-3 1 3 4-2-1-3-3-2 3-3-4 1-4z" fill="#fff200" stroke="#222" /></svg>Alertas</button>
  </div>

  <footer class="taskbar">
    <button class="start" aria-label="Inicio">
      <svg width="38" height="38" viewBox="0 0 38 38"><defs><radialGradient id="orb" cy=".8"><stop offset="0" stop-color="#5fd0f5" /><stop offset=".6" stop-color="#1d5f9a" /><stop offset="1" stop-color="#7e9ab3" /></radialGradient></defs><circle cx="19" cy="19" r="18" fill="url(#orb)" /><path d="M10 11q4-3 9-1l-2 8q-4-2-9 0z" fill="#e8542a" /><path d="M21 11q4 2 9 0l-3 8q-4 2-8 0z" fill="#8cc63e" /><path d="M8 20q4-2 9 0l-2 8q-4-2-9 0z" fill="#3f9be8" /><path d="M19 21q4 2 8 0l-2 8q-5 2-8 0z" fill="#fcc92c" /></svg>
    </button>
    <div class="pinned">
      <button aria-label="Internet Explorer"><svg width="32" height="32" viewBox="0 0 32 32"><path d="M17 5a12 12 0 1 0 11 15h-7q-2 3-5 2-4 0-5-4h18q0-12-12-13zm-6 9q2-4 5-4 4 0 5 4z" fill="#4cb8f0" stroke="#b7e6fb" stroke-width=".6" /><path d="M4 30Q-2 26 9 14 21 1 29 3q3 3-2 9 2-7-3-6Q15 8 6 21q-5 7-2 9z" fill="#f4c726" /></svg></button>
      <button aria-label="Explorador"><svg width="34" height="32" viewBox="0 0 34 32"><path d="M3 2h12l2 4h13l1 20H3z" fill="#e3c46c" stroke="#9b7c30" /><path d="M5 5h9v3h15v18H5z" fill="#f8e9a8" /><path d="M6 19h24v10h-5v-4H12v4H6z" fill="#8ec6e8" stroke="#4a86b3" /><path d="M5 3h4M12 5h5M20 7h4" stroke="#d43" stroke-width="2" /></svg></button>
      <button aria-label="Reproductor"><svg width="30" height="28" viewBox="0 0 30 28"><path d="M2 3h20l5 2v20l-6 1H2z" fill="#6fb4de" stroke="#b7dcf2" /><path d="M22 3v22M25 4v21" stroke="#3d82b0" /><circle cx="12" cy="15" r="9" fill="#f27a1c" stroke="#fcc08a" /><path d="M9 9l9 6-9 6z" fill="#fff" /></svg></button>
    </div>
    <div class="running">
      <button aria-label="Firefox"><svg width="32" height="32" viewBox="0 0 32 32"><circle cx="17" cy="14" r="12" fill="#2a63b4" /><circle cx="18" cy="10" r="6" fill="#67b3e4" /><path d="M3 6l4 2q3-5 8-5-6 4-3 8l5 1-4 4q3 5 9 2 6-4 3-11 5 5 5 12-2 11-14 12Q3 30 1 17 1 10 3 6z" fill="#ec6f16" stroke="#f9b63c" stroke-width=".8" /></svg></button>
      <button aria-label="S"><svg width="32" height="32" viewBox="0 0 32 32"><path d="M0 0h32v32H0z" fill="#f01010" /><path d="M29 7H10q-4 0-4 4t4 4h12q3 0 3 4t-4 5H4" fill="none" stroke="#fff" stroke-width="5" /></svg></button>
      <button class="alpari" aria-label="alpari"><span><svg width="30" height="19" viewBox="0 0 30 19" fill="none"><path d="M2 11l5-5 3 2 5-6 5 6 3-2 5 5" stroke="#e4572e" stroke-dasharray="2 1" /><path d="M2 14l5-4 3 2 5-6 5 6 3-2 5 4" stroke="#f0a030" stroke-dasharray="2 1" /><path d="M2 18l5-4 3 2 5-6 5 6 3-2 5 4" stroke="#80b840" stroke-dasharray="2 1" /></svg>alpari</span></button>
      <button class="active" aria-label="Visual Chart">{@render bull(32)}</button>
    </div>
    <div class="tray">
      <span class="lang">ES</span>
      <svg width="7" height="5" aria-hidden="true"><path d="M0 5h7L3.5 0z" fill="#fff" /></svg>
      <svg width="16" height="16" viewBox="0 0 16 16" aria-hidden="true"><path d="M0 0h16v16H0z" fill="#e8b060" /><circle cx="8" cy="7" r="5" fill="none" stroke="#543" /><path d="M3 7h10M8 2v10" stroke="#543" /><path d="M8 8h8v8H8z" fill="#d22" /><path d="M10 10l4 4M14 10l-4 4" stroke="#fff" stroke-width="1.5" /></svg>
      <svg width="15" height="11" aria-hidden="true"><path d="M0 9h2v2H0zM3 8h2v3H3zM6 5h2v6H6zM9 3h2v8H9zM12 0h2v11h-2z" fill="#fff" /></svg>
      <svg width="12" height="12" aria-hidden="true"><path d="M0 4h3l4-4v12L3 8H0z" fill="#fff" /><path d="M9 3q3 3 0 6" fill="none" stroke="#ccc" /></svg>
      <time>10:10<br />14/11/2012</time>
      <button class="desktop" aria-label="Mostrar escritorio"></button>
    </div>
  </footer>
</main>

<style>
  :global(body) {
    margin: 0;
    background: #fff;
  }

  .screen {
    max-width: 1600px;
    font: 11px/16px 'Open Sans', 'Noto Sans', sans-serif;
    color: #222;
  }

  .screen button,
  .screen select {
    margin: 0;
    padding: 0;
    border: 0;
    background: none;
    font: inherit;
    color: inherit;
  }

  .screen svg {
    flex-shrink: 0;
  }

  .caret {
    fill: #666;
  }

  .frame {
    background:
      linear-gradient(90deg, rgba(205, 214, 226, 0.95) 0, rgba(190, 206, 228, 0.9) 90px, rgba(168, 196, 228, 0.8) 500px, rgba(150, 186, 224, 0.7) 615px, transparent 630px),
      radial-gradient(ellipse 22px 15px at 690px 20px, rgba(200, 222, 242, 0.9) 20%, transparent),
      radial-gradient(ellipse 24px 15px at 1075px 19px, rgba(200, 222, 242, 0.9) 20%, transparent),
      radial-gradient(ellipse 180px 16px at 820px 0, rgba(12, 28, 110, 0.8), transparent),
      radial-gradient(ellipse 160px 18px at 1240px 2px, rgba(20, 60, 150, 0.8), transparent),
      linear-gradient(#284c9e 0, #4566b4 14px, #7c98cc 21px, #ccdaee 29px, #e6effa 40px, #eef4fb 100%);
  }

  .title-bar {
    display: flex;
    height: 30px;
    padding-top: 1px;
    box-sizing: border-box;
  }

  .quick {
    display: flex;
    align-items: center;
    gap: 6px;
    width: 360px;
    height: 28px;
    padding-left: 2px;
    box-sizing: border-box;
  }

  .quick button {
    display: flex;
  }

  .screen .quick-on {
    padding: 1px 3px;
    border: 1px solid #c29a3a;
    border-radius: 3px;
    background: linear-gradient(#fbe08a, #f8c74e);
  }

  .screen .symbol {
    width: 194px;
    height: 19px;
    padding-left: 0;
    appearance: none;
    background:
      linear-gradient(#666, #666) right 5px center / 5px 2px no-repeat,
      #f2f5fa;
  }

  h1 {
    width: 142px;
    margin: 0;
    font: 12px/31px 'Open Sans', sans-serif;
    white-space: nowrap;
    color: #333;
  }

  .context {
    width: 56px;
    margin-top: -1px;
    padding-left: 6px;
    border-right: 1px solid #3f9fa8;
    background: linear-gradient(#3a9fae, #a9d3dc 60%, #c8e2ea);
    line-height: 28px;
    color: #111;
  }

  .window-buttons {
    display: flex;
    gap: 14px;
    height: 18px;
    margin: -1px 0 0 auto;
    padding-right: 3px;
  }

  .window-buttons button {
    display: grid;
    place-items: center;
    width: 28px;
    height: 17px;
  }

  .screen .swap,
  .caption {
    border: 1px solid #b8c6e4;
    border-top: 0;
    border-radius: 0 0 5px 5px;
    background: rgba(90, 125, 190, 0.6);
  }

  .caption {
    display: flex;
    overflow: hidden;
  }

  .screen .caption button {
    background: linear-gradient(#b9c8df, #7388ae 50%, #8ea7cc);
    border-right: 1px solid #50648c;
  }

  .screen .caption .close {
    width: 45px;
    background: linear-gradient(#dba198, #c03c2c 50%, #d8705a);
  }

  .ribbon-tabs {
    display: flex;
    height: 23px;
    border-bottom: 1px solid #72b9c6;
    box-sizing: border-box;
    color: #444;
  }

  .screen .file {
    width: 66px;
    border-radius: 3px 3px 0 0;
    background: linear-gradient(#3e78c8, #1e52a6 55%, #3c84d8);
    font-weight: 600;
    color: #fff;
  }

  .tab-list {
    display: flex;
    flex: 0 0 436px;
    justify-content: space-between;
    box-sizing: border-box;
    padding: 0 16px 0 15px;
  }

  .screen .selected {
    width: 63px;
    margin-bottom: -1px;
    border: 1px solid #72b9c6;
    border-width: 0 1px;
    box-sizing: border-box;
    background: #fbfdfe;
  }

  .status {
    display: flex;
    align-items: center;
    gap: 5px;
    margin-left: auto;
    padding: 0 6px 4px 0;
    white-space: nowrap;
    color: #111;
  }

  .status time {
    padding-left: 4px;
    font: 12px/16px 'DejaVu Sans', sans-serif;
    color: #333;
  }

  .screen .round {
    width: 16px;
    height: 16px;
    border: 1px solid #888;
    border-radius: 50%;
    background: #fafafa;
    font: bold 13px/12px 'Liberation Sans', sans-serif;
    color: #555;
  }

  input[type='range'] {
    width: 133px;
    height: 14px;
    margin: 0 3px;
    appearance: none;
    background: linear-gradient(#888, #888) center / 100% 1px no-repeat;
  }

  input[type='range']::-webkit-slider-thumb {
    appearance: none;
    width: 9px;
    height: 12px;
    border: 1px solid #666;
    border-radius: 1px 1px 5px 5px;
    background: #fff;
  }

  .screen .drop,
  .screen .swatch {
    display: flex;
    align-items: center;
    gap: 10px;
    padding-top: 3px;
  }

  .screen .swatch {
    gap: 3px;
  }

  .swatch i {
    width: 15px;
    height: 16px;
    background: #f8fdff;
  }

  .ribbon {
    display: flex;
    height: 89px;
    border-bottom: 1px solid #84aab0;
    box-sizing: border-box;
    background: linear-gradient(#fff 0, #fdfefe 45%, #eef2f5 100%);
    color: #000;
  }

  .defs {
    position: absolute;
  }

  .group {
    display: flex;
    flex-direction: column;
    box-sizing: border-box;
    padding-top: 4px;
    border-right: 1px solid #b4ccd0;
    white-space: nowrap;
  }

  .charts { width: 97px; }
  .compression { width: 112px; }
  .analysis { width: 173px; }
  .systems { width: 135px; }
  .toolset { width: 113px; }
  .figures { width: 217px; }
  .manage { width: 90px; }

  .group h2 {
    margin: 1px 0 0;
    font: 11px/16px 'Open Sans', sans-serif;
    text-align: center;
    color: #666;
  }

  .body {
    display: flex;
    justify-content: space-between;
    padding-left: 6px;
  }

  .compression .body {
    padding-left: 22px;
  }

  .column {
    display: flex;
    flex-direction: column;
  }

  .charts .column {
    padding-left: 10px;
  }

  .manage .column {
    padding-left: 8px;
  }

  .analysis .column {
    padding-right: 8px;
  }

  .systems .column {
    padding-right: 6px;
  }

  .tight {
    width: 40px;
  }

  .screen .command {
    display: flex;
    align-items: center;
    gap: 4px;
    height: 22px;
  }

  .screen .tight .command {
    gap: 8px;
    padding-left: 3px;
  }

  .screen .tight select {
    width: 36px;
    height: 22px;
    border: 1px solid #c8d8dc;
    appearance: none;
    background:
      linear-gradient(#666, #666) right 4px center / 5px 2px no-repeat,
      #f8fafb;
  }

  .screen .off {
    color: #999;
  }

  .off ellipse {
    fill: #b0b0b0;
  }

  .big {
    display: flex;
    flex-direction: column;
    align-items: center;
    gap: 3px;
    height: 66px;
  }

  .screen .big {
    line-height: 20px;
  }

  .big > svg:first-child {
    margin-top: 3px;
    height: 29px;
  }

  .glyphs {
    display: grid;
    grid-template-columns: repeat(4, 26px);
    padding-left: 4px;
  }

  .wide {
    grid-template-columns: repeat(8, 26px);
    padding-left: 3px;
  }

  .screen .glyph {
    display: grid;
    place-items: center;
    height: 22px;
    border: 1px solid transparent;
    border-radius: 3px;
  }

  .screen .glyph.on {
    border-color: #b99030;
    background: linear-gradient(#fbd76c, #fddf74);
  }

  .pager {
    display: flex;
    align-items: center;
    gap: 16px;
    height: 22px;
    padding-left: 6px;
  }

  .pages {
    display: flex;
    align-items: flex-end;
    height: 27px;
    padding-left: 3px;
    border-bottom: 1px solid #9aa2a8;
    box-sizing: border-box;
    background: #eceff3;
  }

  .screen .page {
    height: 20px;
    padding: 0 5px 2px;
    border-right: 2px solid #888e94;
    background: #f8f9fb;
    white-space: nowrap;
    color: #333;
  }

  .screen .blue,
  .screen .green,
  .screen .amber,
  .screen .rose {
    padding: 0 5px 2px 6px;
  }

  .screen .blue { background: linear-gradient(#cdd6fb, #aab6f2); }
  .screen .green { background: linear-gradient(#d2f5d2, #a6e6ac); }
  .screen .amber { background: linear-gradient(#fbd590, #f0b850); }
  .screen .rose { background: linear-gradient(#fbbcc4, #f08c9c); }

  .screen .current {
    font-weight: 600;
  }

  .current svg {
    vertical-align: -2px;
  }

  .steps {
    display: flex;
    gap: 11px;
    margin-left: auto;
    padding: 0 9px 2px 0;
  }

  .steps svg,
  .step svg {
    fill: none;
    stroke: #333;
  }

  .documents {
    display: flex;
    align-items: stretch;
    height: 18px;
    padding: 0 10px 0 5px;
    background: #f6f7f9;
  }

  .screen .document {
    display: flex;
    align-items: center;
    gap: 10px;
    margin-left: 8px;
    padding: 1px 4px 0 23px;
    background: linear-gradient(#d9a4fb, #ecbcff);
    clip-path: polygon(0 100%, 17px 8%, 20px 0, 100% 0, 100% 100%);
    font-weight: 700;
    color: #000;
  }

  .screen .end {
    margin-left: auto;
  }

  .chart-window {
    padding: 2px 3px 1px 4px;
    border-top: 1px solid #8f9499;
    border-right: 1px solid #dca8ee;
    border-bottom: 1px solid #cf9ae6;
    background: linear-gradient(90deg, #b9aecb 3px, #555 3px 4px, #f0f0f0 4px);
    font-family: 'Liberation Mono', monospace;
    font-size: 10px;
  }

  .quote-bar,
  .rsi-bar {
    display: flex;
    justify-content: space-between;
    align-items: center;
    padding: 0 4px 0 3px;
  }

  .quote-bar {
    height: 14px;
    border-top: 1px solid #555;
    background: #cbcbcb;
  }

  .quote-bar em {
    font-style: normal;
    color: #f00;
  }

  .rsi-bar {
    height: 14px;
    border-top: 1px solid #000;
    background: #fff;
  }

  .rsi-bar span {
    color: #444;
  }

  .pane-buttons {
    display: flex;
    gap: 2px;
  }

  .screen .pane-buttons button {
    display: grid;
    width: 11px;
    height: 11px;
    place-items: center;
    border-bottom: 1px solid #777;
    background: #dcdcd4;
    box-sizing: border-box;
  }

  .pane-buttons svg {
    fill: none;
    stroke: #000;
    stroke-width: 1.4;
  }

  .plot {
    display: block;
    width: 100%;
    background: #efefef;
  }

  .rsi {
    background: #fff;
    border-bottom: 1px solid #000;
  }

  .plot text,
  .dates text {
    font: 12px 'Liberation Sans', sans-serif;
    fill: #222;
  }

  .plot .major {
    font: bold 15px 'Liberation Mono', monospace;
    fill: #f00;
  }

  .plot .minor,
  .plot .target {
    font: bold 14px 'Liberation Mono', monospace;
    fill: #f0f;
  }

  .plot .target {
    fill: #00008b;
  }

  .plot .light {
    fill: #fff;
  }

  .grid {
    fill: none;
    stroke: #a8a8a8;
    stroke-dasharray: 3 3;
    shape-rendering: crispEdges;
  }

  .year {
    stroke: #c8ccc8;
    shape-rendering: crispEdges;
  }

  .mark {
    stroke: #333;
  }

  .candles {
    stroke: #000;
    shape-rendering: crispEdges;
  }

  .candles .down {
    stroke: none;
  }

  .average,
  .trend,
  .strength {
    fill: none;
    shape-rendering: crispEdges;
  }

  .slow { stroke: #400080; }
  .medium { stroke: #f00; }
  .fast { stroke: #ffd21a; }
  .red { stroke: #f00; }
  .sky { stroke: #00a8e8; }
  .pink { stroke: #f0f; }
  .royal { stroke: #0050c8; }

  .strength { stroke: #444; }
  .high { stroke: #0078f0; }
  .low { stroke: #f02010; }

  .limit {
    stroke: #222;
  }

  .zone {
    fill: #f0f2f0;
    stroke: #0a5c12;
  }

  .axis path {
    fill: none;
    stroke: #333;
    shape-rendering: crispEdges;
  }

  .date-row {
    display: flex;
    align-items: center;
    gap: 5px;
    border-bottom: 1px solid #c9cfc9;
  }

  .dates {
    flex: 1;
    min-width: 0;
  }

  .date-row button {
    display: grid;
    place-items: center;
    width: 17px;
    height: 17px;
  }

  .screen .corner {
    background: #fff;
  }

  .pair {
    display: flex;
    border: 1px solid #b98a30;
    border-radius: 3px;
    background: #fbd468;
  }

  .scroll {
    display: flex;
    align-items: center;
    height: 16px;
    padding: 0 1px;
  }

  .screen .scroll button,
  .thumb {
    display: grid;
    place-items: center;
    width: 15px;
    height: 14px;
    box-sizing: border-box;
    border: 1px solid #888;
    border-radius: 2px;
    background: linear-gradient(#fafafa, #c8c8c8);
  }

  .track {
    display: flex;
    flex: 1;
    justify-content: flex-end;
    padding-right: 2px;
  }

  .thumb {
    width: 99px;
  }

  .alerts {
    display: flex;
    height: 20px;
    padding: 2px 0 0 4px;
    border-bottom: 1px solid #222;
    background: #e6eaf0;
  }

  .screen .euro {
    display: grid;
    place-items: center;
    width: 22px;
    border: 1px solid #aab4c0;
    background: #eef4fa;
  }

  .screen .alert {
    display: flex;
    align-items: center;
    gap: 17px;
    width: 82px;
    border: 1px solid #b8ac88;
    background: linear-gradient(90deg, #fdf0c0, #f8dc90);
    color: #666;
  }

  .taskbar {
    display: flex;
    height: 40px;
    box-shadow: inset 0 1px #6c7480;
    background:
      linear-gradient(87deg, transparent 524px, #6f88a0 529px, #90a6ba 533px, transparent 540px),
      linear-gradient(90deg, #111 0, #3c3c3c 60px, #101316 100px, #15181b 700px, #0a1030 860px, #0a1238 1100px, #14275a 1400px, #1b3260 100%);
  }

  .screen .start {
    width: 58px;
    padding-left: 8px;
    text-align: left;
  }

  .pinned {
    display: flex;
    width: 188px;
  }

  .pinned button {
    display: grid;
    flex: 1;
    place-items: center;
  }

  .running {
    display: flex;
    gap: 4px;
  }

  .screen .running button {
    display: grid;
    place-items: center;
    width: 58px;
    height: 39px;
    border: 1px solid #999;
    border-radius: 3px;
    background: linear-gradient(160deg, #86898c, #3a3c3f 50%, #1f2123);
  }

  .screen .running .active {
    background: linear-gradient(160deg, #b8babc, #77797b 60%, #8f9193);
  }

  .alpari span {
    display: flex;
    flex-direction: column;
    align-items: center;
    width: 32px;
    height: 32px;
    border-radius: 3px;
    background: #fff;
    font-size: 10px;
    line-height: 10px;
    color: #222;
  }

  .tray {
    display: flex;
    align-items: center;
    gap: 10px;
    margin-left: auto;
    color: #fff;
  }

  .lang {
    padding: 0 10px 5px 0;
  }

  .tray time {
    padding: 0 2px 0 11px;
    line-height: 17px;
    text-align: center;
  }

  .screen .desktop {
    width: 13px;
    height: 38px;
    border: 1px solid #6c7c98;
    background: linear-gradient(135deg, #50617f, #152040);
  }
</style>
